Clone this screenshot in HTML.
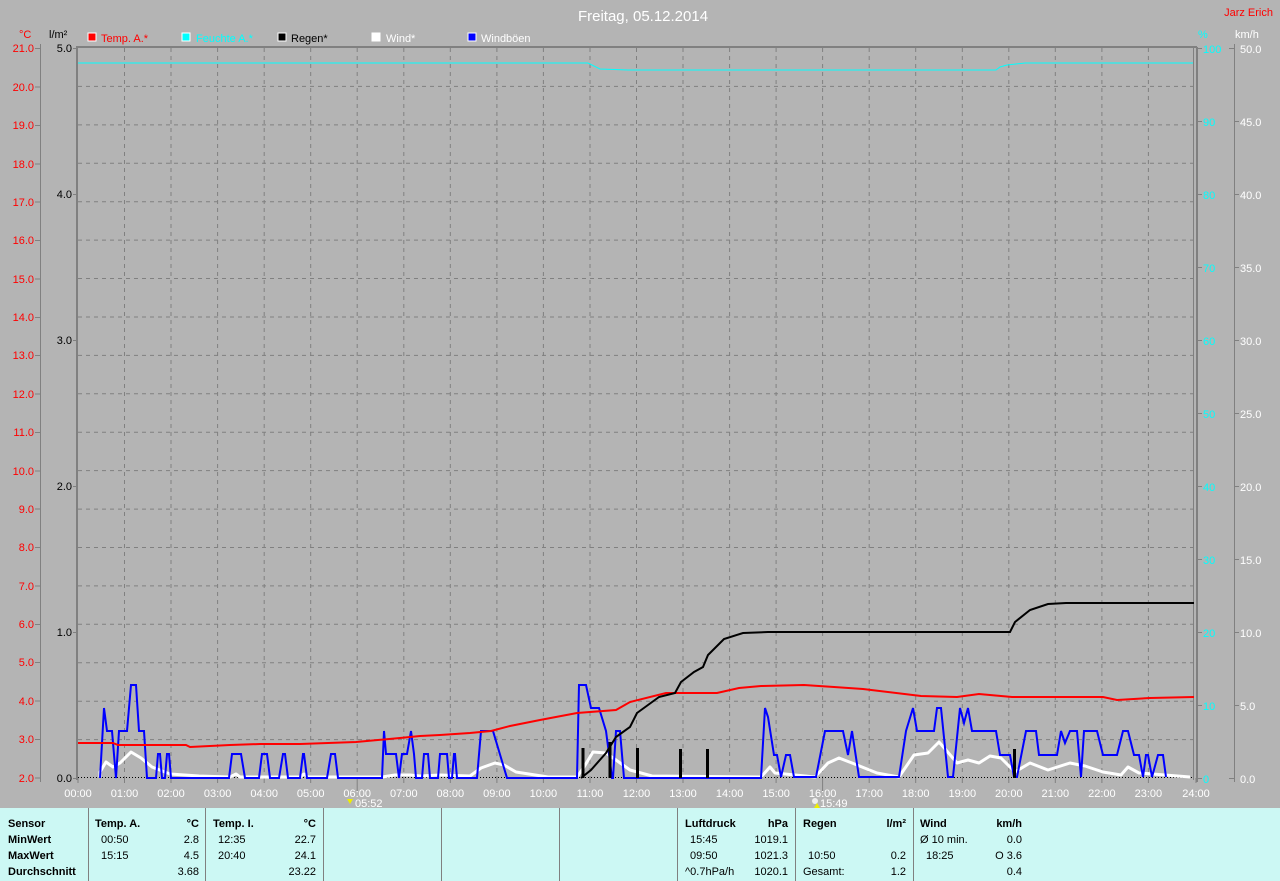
<!DOCTYPE html>
<html><head><meta charset="utf-8"><style>
html,body{margin:0;padding:0;background:#b4b4b4;width:1280px;height:881px;overflow:hidden}
svg{display:block}
text{font-family:"Liberation Sans",sans-serif}
</style></head><body>
<svg width="1280" height="881" viewBox="0 0 1280 881" xmlns="http://www.w3.org/2000/svg">
<rect width="1280" height="881" fill="#b4b4b4"/>
<text x="643" y="21" fill="#fff" font-size="15" text-anchor="middle">Freitag, 05.12.2014</text>
<text x="1273" y="16" fill="#f00" font-size="11" text-anchor="end">Jarz Erich</text>
<text x="19" y="38" fill="#f00" font-size="11">°C</text>
<text x="49" y="38" fill="#000" font-size="11">l/m²</text>
<rect x="88" y="33" width="8" height="8" fill="#f00" stroke="#fff" stroke-width="1"/>
<text x="101" y="42" fill="#f00" font-size="11">Temp. A.*</text>
<rect x="182" y="33" width="8" height="8" fill="#0ff" stroke="#fff" stroke-width="1"/>
<text x="196" y="42" fill="#0ff" font-size="11">Feuchte A.*</text>
<rect x="278" y="33" width="8" height="8" fill="#000" stroke="#fff" stroke-width="1"/>
<text x="291" y="42" fill="#000" font-size="11">Regen*</text>
<rect x="372" y="33" width="8" height="8" fill="#fff" stroke="#fff" stroke-width="1"/>
<text x="386" y="42" fill="#fff" font-size="11">Wind*</text>
<rect x="468" y="33" width="8" height="8" fill="#00f" stroke="#fff" stroke-width="1"/>
<text x="481" y="42" fill="#fff" font-size="11">Windböen</text>
<text x="1198" y="38" fill="#0ff" font-size="11">%</text>
<text x="1235" y="38" fill="#fff" font-size="11">km/h</text>

<g stroke="#808080" stroke-width="1" stroke-dasharray="4,4">
<path d="M124.5 48V778M171 48V778M217.6 48V778M264.2 48V778M310.7 48V778M357.2 48V778M403.8 48V778M450.3 48V778M496.9 48V778M543.4 48V778M590 48V778M636.5 48V778M683 48V778M729.6 48V778M776.1 48V778M822.6 48V778M869.2 48V778M915.7 48V778M962.3 48V778M1008.8 48V778M1055.3 48V778M1101.9 48V778M1148.4 48V778"/>
<path d="M78 739.6H1193M78 701.2H1193M78 662.7H1193M78 624.3H1193M78 585.9H1193M78 547.5H1193M78 509.1H1193M78 470.6H1193M78 432.2H1193M78 393.8H1193M78 355.4H1193M78 317H1193M78 278.5H1193M78 240.1H1193M78 201.7H1193M78 163.3H1193M78 124.9H1193M78 86.4H1193"/>
</g>
<path d="M76 47H1197" stroke="#808080" stroke-width="2"/>
<path d="M77 47V780" stroke="#808080" stroke-width="2"/>
<path d="M1193.5 48V780" stroke="#808080" stroke-width="1"/>
<path d="M1197 47V782" stroke="#808080" stroke-width="2"/>
<path d="M40.5 44V782" stroke="#808080" stroke-width="1"/>
<path d="M1234.5 44V782" stroke="#808080" stroke-width="1"/>
<g stroke="#808080" stroke-width="1">
<path d="M35 48.5h6M35 87h6M35 125.5h6M35 164h6M35 202h6M35 240.5h6M35 279h6M35 317.5h6M35 355.5h6M35 394h6M35 432.5h6M35 471h6M35 509h6M35 547.5h6M35 586h6M35 624.5h6M35 662.5h6M35 701h6M35 739.5h6M35 778h6"/>
<path d="M73 48.5h4M73 194.5h4M73 340.5h4M73 486.5h4M73 632.5h4M73 778.5h4"/>
<path d="M1198 48.5h4M1198 121.5h4M1198 194.5h4M1198 267.5h4M1198 340.5h4M1198 413.5h4M1198 486.5h4M1198 559.5h4M1198 632.5h4M1198 705.5h4M1198 778.5h4"/>
<path d="M1229 48.5h6M1235 121.5h4M1235 194.5h4M1235 267.5h4M1235 340.5h4M1235 413.5h4M1235 486.5h4M1235 559.5h4M1235 632.5h4M1235 705.5h4M1229 778.5h6"/>
<path d="M78 778v5M124.5 778v5M171 778v5M217.6 778v5M264.2 778v5M310.7 778v5M357.2 778v13M403.8 778v5M450.3 778v5M496.9 778v5M543.4 778v5M590 778v5M636.5 778v5M683 778v5M729.6 778v5M776.1 778v5M822.6 778v13M869.2 778v5M915.7 778v5M962.3 778v5M1008.8 778v5M1055.3 778v5M1101.9 778v5M1148.4 778v5M1196 778v5"/>
</g>
<g fill="#f00" font-size="11" text-anchor="end">
<text x="34" y="52">21.0</text><text x="34" y="91">20.0</text><text x="34" y="129">19.0</text><text x="34" y="168">18.0</text><text x="34" y="206">17.0</text><text x="34" y="244">16.0</text><text x="34" y="283">15.0</text><text x="34" y="321">14.0</text><text x="34" y="359">13.0</text><text x="34" y="398">12.0</text><text x="34" y="436">11.0</text><text x="34" y="475">10.0</text><text x="34" y="513">9.0</text><text x="34" y="551">8.0</text><text x="34" y="590">7.0</text><text x="34" y="628">6.0</text><text x="34" y="666">5.0</text><text x="34" y="705">4.0</text><text x="34" y="743">3.0</text><text x="34" y="782">2.0</text>
</g>
<g fill="#000" font-size="11" text-anchor="end">
<text x="72" y="52">5.0</text><text x="72" y="198">4.0</text><text x="72" y="344">3.0</text><text x="72" y="490">2.0</text><text x="72" y="636">1.0</text><text x="72" y="782">0.0</text>
</g>
<g fill="#0ff" font-size="11">
<text x="1203" y="53">100</text><text x="1203" y="126">90</text><text x="1203" y="199">80</text><text x="1203" y="272">70</text><text x="1203" y="345">60</text><text x="1203" y="418">50</text><text x="1203" y="491">40</text><text x="1203" y="564">30</text><text x="1203" y="637">20</text><text x="1203" y="710">10</text><text x="1203" y="783">0</text>
</g>
<g fill="#fff" font-size="11">
<text x="1240" y="53">50.0</text><text x="1240" y="126">45.0</text><text x="1240" y="199">40.0</text><text x="1240" y="272">35.0</text><text x="1240" y="345">30.0</text><text x="1240" y="418">25.0</text><text x="1240" y="491">20.0</text><text x="1240" y="564">15.0</text><text x="1240" y="637">10.0</text><text x="1240" y="710">5.0</text><text x="1240" y="783">0.0</text>
</g>
<g fill="#fff" font-size="11" text-anchor="middle">
<text x="78" y="797">00:00</text><text x="124.5" y="797">01:00</text><text x="171" y="797">02:00</text><text x="217.6" y="797">03:00</text><text x="264.2" y="797">04:00</text><text x="310.7" y="797">05:00</text><text x="357.2" y="797">06:00</text><text x="403.8" y="797">07:00</text><text x="450.3" y="797">08:00</text><text x="496.9" y="797">09:00</text><text x="543.4" y="797">10:00</text><text x="590" y="797">11:00</text><text x="636.5" y="797">12:00</text><text x="683" y="797">13:00</text><text x="729.6" y="797">14:00</text><text x="776.1" y="797">15:00</text><text x="822.6" y="797">16:00</text><text x="869.2" y="797">17:00</text><text x="915.7" y="797">18:00</text><text x="962.3" y="797">19:00</text><text x="1008.8" y="797">20:00</text><text x="1055.3" y="797">21:00</text><text x="1101.9" y="797">22:00</text><text x="1148.4" y="797">23:00</text><text x="1196" y="797">24:00</text>
</g>
<path d="M347 799l3 5 3-5z" fill="#ee0"/><text x="355" y="807" fill="#fff" font-size="11">05:52</text>
<circle cx="815" cy="801" r="3" fill="#eee"/><path d="M814 808l3-5 3 5z" fill="#ee0"/><text x="820" y="807" fill="#fff" font-size="11">15:49</text>

<polyline fill="none" stroke="#0ff" stroke-width="1" points="78,63 588,63 600,69 628,70 996,70 1000,67 1007,65 1025,63 1193,63"/>
<path d="M78 777.5H1193" stroke="#000" stroke-width="1" stroke-dasharray="1,2"/>
<polyline fill="none" stroke="#fff" stroke-width="3" stroke-linejoin="round" points="100,777 100,772 106,762 113,767 120,763 131,752 141,758 152,767 170,774 199,776 230,777 236,774 240,777 300,777 304,774 308,777 382,777 395,775 410,775 420,776 440,775 470,776 481,768 495,763 504,765 516,772 548,777 577,777 584,767 593,752 606,753 616,760 630,770 652,776 761,777 770,767 775,773 815,777 828,763 839,758 852,763 877,773 899,777 914,755 928,753 939,742 946,750 957,763 968,760 979,763 990,756 1001,758 1015,772 1030,763 1048,770 1070,763 1085,766 1103,772 1121,775 1128,767 1139,773 1165,775 1190,777"/>
<polyline fill="none" stroke="#00f" stroke-width="2" points="100,778 104,708 107,731 112,731 116,778 119,731 127,731 131,685 136,685 139,731 144,731 147,778 156,778 158,754 160,754 162,778 165,778 167,754 169,754 171,778 229,778 232,754 241,754 245,778 259,778 262,754 267,754 270,778 279,778 283,754 285,754 288,778 300,778 303,754 304,754 307,778 327,778 331,754 335,754 338,778 382,778 384,731 386,754 396,754 399,778 402,754 407,754 411,731 414,754 416,778 422,778 424,754 428,754 430,778 438,778 440,754 447,754 449,778 452,778 454,754 455,754 457,778 477,778 481,731 493,731 507,778 577,778 579,685 586,685 591,708 599,708 606,731 609,754 612,778 613,778 616,731 620,731 624,778 761,778 765,708 768,717 774,755 777,755 781,777 786,755 790,755 794,777 816,777 825,731 843,731 848,755 852,731 859,777 899,777 906,731 913,708 917,731 934,731 937,708 941,708 948,777 953,777 960,708 964,723 968,708 972,731 996,731 1000,755 1010,755 1014,777 1017,777 1026,731 1036,731 1039,755 1057,755 1061,731 1065,743 1070,731 1077,731 1081,777 1084,731 1097,731 1103,755 1117,755 1123,731 1128,731 1134,755 1139,755 1143,777 1146,755 1148,755 1152,777 1158,755 1163,755 1166,777"/>
<polyline fill="none" stroke="#f00" stroke-width="2" points="78,743 113,743 118,745 186,745 190,747 230,745 260,744 300,744 356,742 400,738 420,736 440,735 470,733 491,731 510,726 540,720 577,713 616,710 630,702 666,693 717,693 739,688 761,686 804,685 834,687 863,689 921,696 957,697 979,694 1012,697 1103,697 1117,700 1150,698 1194,697"/>
<polyline fill="none" stroke="#000" stroke-width="2" points="581,778 591,770 606,753 616,737 630,727 637,713 659,697 675,693 681,682 694,672 703,667 708,655 724,639 743,633 768,632 1010,632 1015,622 1030,610 1048,604 1066,603 1194,603"/>
<path d="M583 778V748M610 778V742M637.5 778V748M680.5 778V749M707.5 778V749M1014.5 778V749" stroke="#000" stroke-width="3"/>

<rect x="0" y="808" width="1280" height="73" fill="#ccf8f4"/>
<g stroke="#808080" stroke-width="1"><path d="M88.5 808V881M205.5 808V881M323.5 808V881M441.5 808V881M559.5 808V881M677.5 808V881M795.5 808V881M913.5 808V881"/></g>
<g font-size="11" fill="#000">
<g font-weight="bold">
<text x="8" y="827">Sensor</text><text x="8" y="843">MinWert</text><text x="8" y="859">MaxWert</text><text x="8" y="875">Durchschnitt</text>
<text x="95" y="827">Temp. A.</text><text x="199" y="827" text-anchor="end">°C</text>
<text x="213" y="827">Temp. I.</text><text x="316" y="827" text-anchor="end">°C</text>
<text x="685" y="827">Luftdruck</text><text x="788" y="827" text-anchor="end">hPa</text>
<text x="803" y="827">Regen</text><text x="906" y="827" text-anchor="end">l/m²</text>
<text x="920" y="827">Wind</text><text x="1022" y="827" text-anchor="end">km/h</text>
</g>
<text x="101" y="843">00:50</text><text x="199" y="843" text-anchor="end">2.8</text>
<text x="101" y="859">15:15</text><text x="199" y="859" text-anchor="end">4.5</text>
<text x="199" y="875" text-anchor="end">3.68</text>
<text x="218" y="843">12:35</text><text x="316" y="843" text-anchor="end">22.7</text>
<text x="218" y="859">20:40</text><text x="316" y="859" text-anchor="end">24.1</text>
<text x="316" y="875" text-anchor="end">23.22</text>
<text x="690" y="843">15:45</text><text x="788" y="843" text-anchor="end">1019.1</text>
<text x="690" y="859">09:50</text><text x="788" y="859" text-anchor="end">1021.3</text>
<text x="685" y="875">^0.7hPa/h</text><text x="788" y="875" text-anchor="end">1020.1</text>
<text x="808" y="859">10:50</text><text x="906" y="859" text-anchor="end">0.2</text>
<text x="803" y="875">Gesamt:</text><text x="906" y="875" text-anchor="end">1.2</text>
<text x="920" y="843">Ø 10 min.</text><text x="1022" y="843" text-anchor="end">0.0</text>
<text x="926" y="859">18:25</text><text x="1022" y="859" text-anchor="end">O 3.6</text>
<text x="1022" y="875" text-anchor="end">0.4</text>
</g>
</svg>
</body></html>
